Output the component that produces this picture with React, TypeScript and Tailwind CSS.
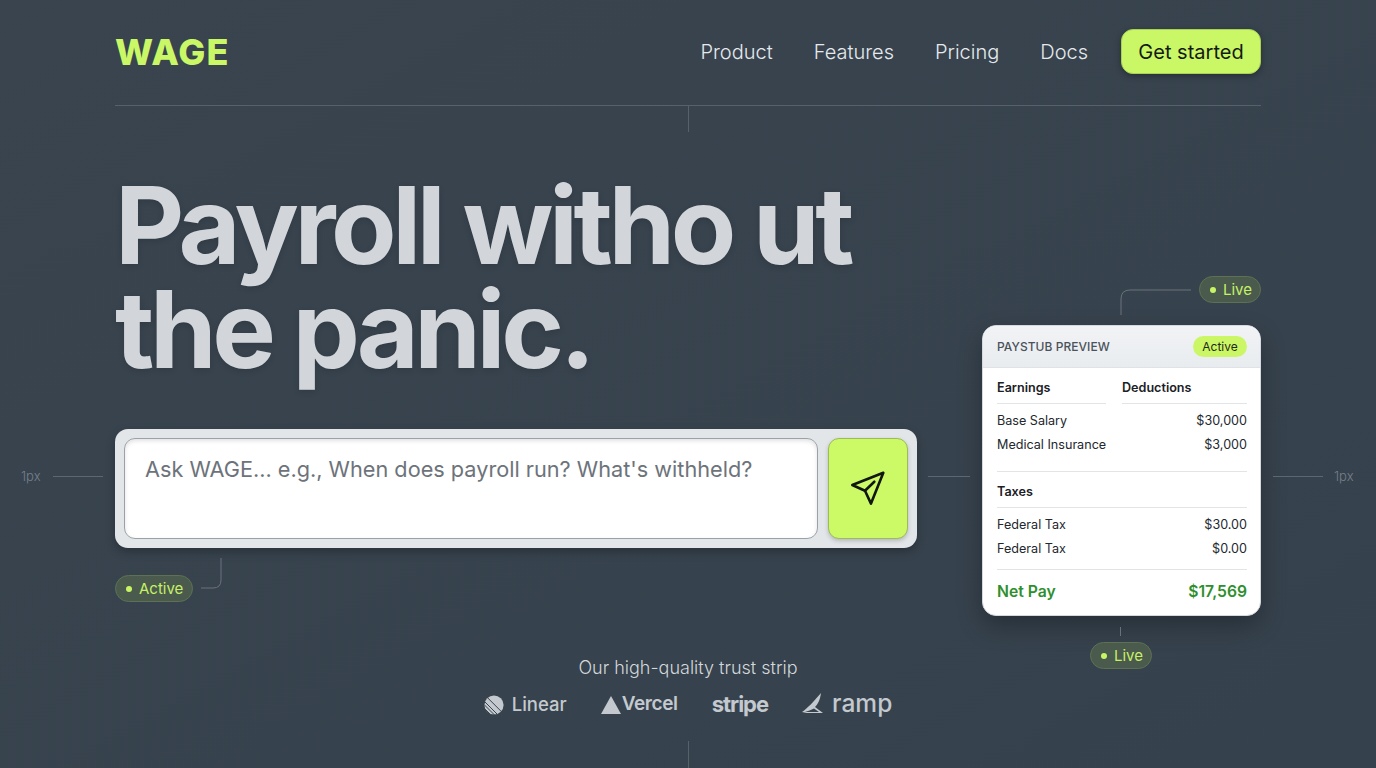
function Pill({ label, live }: { label: string; live?: boolean }) {
  return (
    <div className={`flex h-[27px] items-center gap-[7px] rounded-full border border-[#5d7253] bg-[#4a5a4c] pl-[10px] text-[15px] leading-none text-[#c6f068] ${live ? "w-[62px]" : "w-[78px]"}`}>
      <span className="h-[6px] w-[6px] rounded-full bg-[#c8f565]" />
      {label}
    </div>
  );
}

function Row({ left, right }: { left: string; right: string }) {
  return (
    <div className="flex h-[24px] items-center justify-between text-[12.6px] text-[#23282e]">
      <span>{left}</span>
      <span>{right}</span>
    </div>
  );
}

function Linear() {
  return (
    <svg width="20" height="20" viewBox="0 0 20 20" fill="none" className="shrink-0">
      <circle cx="10" cy="10" r="9.6" fill="#c3c9ce" />
      <path d="M0 6 L14 20 M0 9.5 L10.5 20 M0 13 L7 20 M2.4 1.6 L18.4 17.6" stroke="#39444f" strokeWidth="1" />
    </svg>
  );
}

function Ramp() {
  return (
    <svg width="22" height="21" viewBox="0 0 22 21" className="shrink-0">
      <path d="M0 19 C6 15 11 9 19 0 C18 7 16 11 13 14 L21 20 L9 20 C7 20 3 20 0 19 Z M3 19 L17 19 L12 15.5 C9 17 6 18 3 19 Z" fill="#c3c9ce" fillRule="evenodd" />
    </svg>
  );
}

function Plane() {
  return (
    <svg width="36" height="36" viewBox="0 0 36 36" fill="none" stroke="currentColor" strokeWidth="2.6" strokeLinejoin="round" strokeLinecap="round">
      <path d="M33.3 1.7 L2.3 14 L15 19.7 L21 32.6 Z" />
      <path d="M15 19.7 L24.3 10.7" />
    </svg>
  );
}

export default function App() {
  return (
    <div
      className="relative flex h-[768px] w-full flex-col overflow-hidden bg-[#38444f] bg-gradient-to-br from-[#39444f] to-[#35414c] px-[115px] text-white"
      style={{ fontFamily: "Inter, 'Liberation Sans', sans-serif" }}
    >
      <header className="flex h-[106px] shrink-0 items-start justify-between border-b border-[#56616c] pt-[29px]">
        <div className="mt-[1px] text-[36px] font-extrabold leading-[45px] tracking-[1px] text-[#c9f766]">WAGE</div>
        <nav className="flex items-center">
          <div className="flex items-center gap-[41px] text-[20px] font-light text-[#e6e9ec]">
            <a>Product</a>
            <a>Features</a>
            <a>Pricing</a>
            <a>Docs</a>
          </div>
          <button className="ml-[33px] flex h-[45px] w-[140px] items-center justify-center rounded-[12px] border border-[#a9d255] bg-[#c9f766] text-[20px] font-normal text-[#141a12] shadow-[0_2px_6px_rgba(0,0,0,0.3)]">
            Get started
          </button>
        </nav>
      </header>

      <div className="absolute left-[688px] top-[106px] h-[26px] w-px bg-[#56616c]" />

      <div className="flex h-[552px] shrink-0 items-start justify-between">
        <div className="w-[802px]">
          <h1 className="mt-[67px] whitespace-pre text-[107px] font-bold leading-[104px] tracking-[-4.4px] text-[#d2d6da] [text-shadow:0_2px_6px_rgba(0,0,0,0.14)]">
            {"Payroll witho ut\nthe panic."}
          </h1>
          <div className="mt-[48px] flex h-[119px] gap-[10px] rounded-[13px] bg-[#e3e6e9] p-[9px] shadow-[0_4px_10px_rgba(0,0,0,0.25)]">
            <div className="flex-1 rounded-[11px] border border-[#9aa1a8] bg-white px-[20px] pt-[15px] text-[21.7px] leading-[30px] text-[#6d737a] shadow-[inset_0_2px_4px_rgba(0,0,0,0.12)]">
              Ask WAGE... e.g., When does payroll run? What's withheld?
            </div>
            <button className="flex w-[80px] items-center justify-center rounded-[11px] border border-[#9dbb5c] bg-[#cbfa66] text-[#11160f] shadow-[0_2px_4px_rgba(0,0,0,0.2)]">
              <Plane />
            </button>
          </div>
          <div className="relative mt-[27px]">
            <Pill label="Active" />
            <svg className="absolute left-[85px] top-[-18px]" width="24" height="34" viewBox="0 0 24 34" fill="none">
              <path d="M21 1 V23 Q21 31 13 31 H1" stroke="#68727c" strokeWidth="1" />
            </svg>
          </div>
        </div>

        <div className="relative mt-[170px] flex w-[279px] flex-col">
          <div className="self-end">
            <Pill label="Live" live />
          </div>
          <svg className="absolute left-[138px] top-[13px]" width="72" height="26" viewBox="0 0 72 26" fill="none">
            <path d="M1 26 V10 Q1 1 10 1 H71" stroke="#68727c" strokeWidth="1" />
          </svg>
          <div className="mt-[22px] h-[291px] overflow-hidden rounded-[14px] border border-[#d5d9dd] bg-white shadow-[0_10px_24px_rgba(0,0,0,0.28)]">
            <div className="flex h-[42px] items-center justify-between border-b border-[#dfe2e6] bg-gradient-to-b from-[#f1f3f5] to-[#e9ecef] pl-[14px] pr-[13px]">
              <span className="text-[12px] font-medium tracking-[0.05px] text-[#4a525a]">PAYSTUB PREVIEW</span>
              <span className="flex h-[21px] w-[54px] items-center justify-center rounded-full bg-[#cbf766] text-[12px] font-normal text-[#1f2a14]">Active</span>
            </div>
            <div className="pl-[14px] pr-[13px]">
              <div className="flex h-[36px] gap-[16px] text-[12.6px] font-semibold text-[#1b2025]">
                <div className="flex w-[109px] items-center border-b border-[#e2e5e8] pt-[5px]">Earnings</div>
                <div className="flex flex-1 items-center border-b border-[#e2e5e8] pt-[5px]">Deductions</div>
              </div>
              <div className="pt-[5px]">
                <Row left="Base Salary" right="$30,000" />
                <Row left="Medical Insurance" right="$3,000" />
              </div>
              <div className="mt-[14px] flex h-[37px] items-center border-y border-[#e2e5e8] pt-[5px] text-[12.6px] font-semibold text-[#1b2025]">Taxes</div>
              <div className="pt-[5px]">
                <Row left="Federal Tax" right="$30.00" />
                <Row left="Federal Tax" right="$0.00" />
              </div>
              <div className="mt-[8px] flex h-[45px] items-center justify-between border-t border-[#e2e5e8] text-[15.7px] font-semibold text-[#2f8f2e]">
                <span>Net Pay</span>
                <span>$17,569</span>
              </div>
            </div>
          </div>
          <div className="ml-[138px] mt-[11px] h-[9px] w-px bg-[#68727c]" />
          <div className="ml-[108px] mt-[6px]">
            <Pill label="Live" live />
          </div>
        </div>
      </div>

      <section className="flex flex-col items-center">
        <p className="text-[18px] font-light leading-[20px] text-[#d3d7db]">Our high-quality trust strip</p>
        <div className="mt-[14px] flex h-[24px] items-center text-[#c3c9ce]">
          <div className="flex items-center gap-[8px] pt-[1px] text-[18.5px] font-medium">
            <Linear />
            Linear
          </div>
          <div className="ml-[34px] flex items-center gap-[1px] pt-[1px] text-[19px] font-semibold tracking-[-0.4px]">
            <svg width="20" height="18" viewBox="0 0 20 18">
              <path d="M10 0 L20 18 H0 Z" fill="#c3c9ce" />
            </svg>
            Vercel
          </div>
          <div className="ml-[34px] text-[22px] font-bold tracking-[-1px]">stripe</div>
          <div className="ml-[34px] flex items-center gap-[8px] pb-[2px] text-[24.5px] font-medium">
            <Ramp />
            ramp
          </div>
        </div>
      </section>

      <div className="absolute bottom-0 left-[688px] h-[27px] w-px bg-[#56616c]" />

      <span className="absolute left-[21px] top-[468px] text-[13px] font-light leading-[16px] text-[#75808a]">1px</span>
      <div className="absolute left-[53px] top-[476px] h-px w-[50px] bg-[#5c6771]" />
      <div className="absolute left-[928px] top-[476px] h-px w-[42px] bg-[#5c6771]" />
      <div className="absolute left-[1273px] top-[476px] h-px w-[50px] bg-[#5c6771]" />
      <span className="absolute left-[1334px] top-[468px] text-[13px] font-light leading-[16px] text-[#75808a]">1px</span>
    </div>
  );
}
